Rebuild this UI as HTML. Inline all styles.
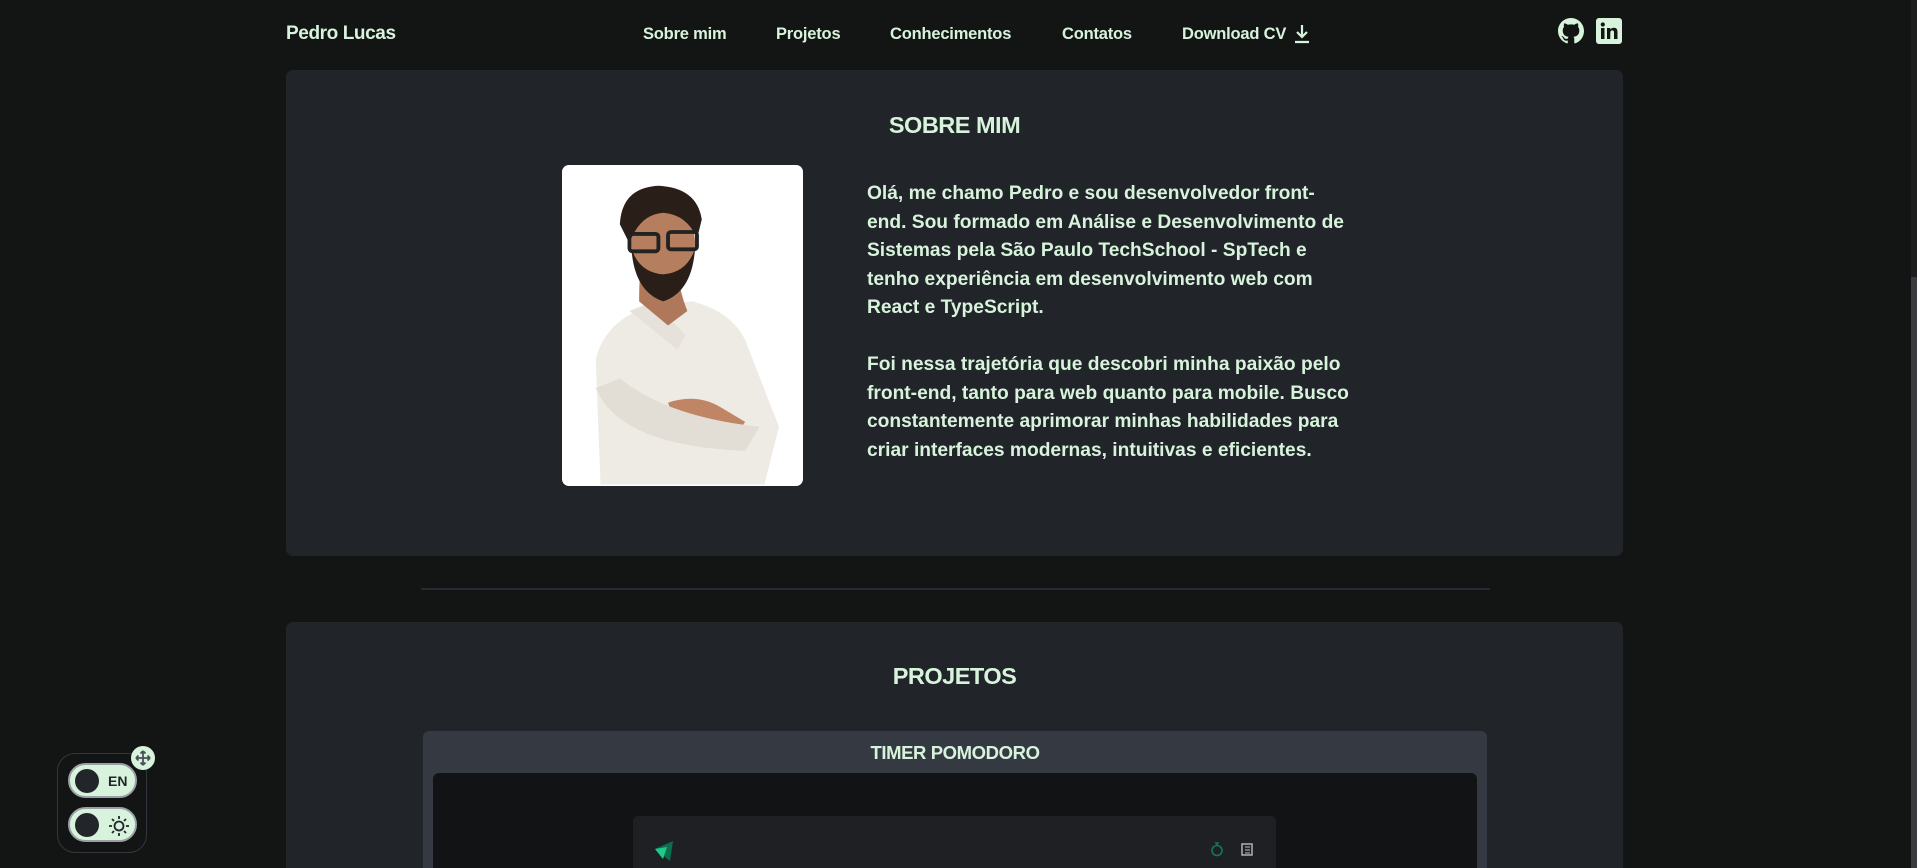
<!DOCTYPE html>
<html><head><meta charset="utf-8"><style>
*{margin:0;padding:0;box-sizing:border-box}
html,body{width:1917px;height:868px;max-height:868px;overflow:hidden;background:#131515;font-family:"Liberation Sans",sans-serif;color:#d8f3dc}
body{position:relative}
.abs{position:absolute}
.nav{font-size:16.5px;font-weight:bold;top:25px;white-space:nowrap;letter-spacing:-0.2px}
.box{position:absolute;left:286px;width:1337px;background:#212429;border-radius:7px}
h2{position:absolute;width:100%;text-align:center;font-size:23.5px;font-weight:bold;letter-spacing:-0.5px}
.txt{position:absolute;left:867px;top:180px;font-size:19.2px;line-height:28.5px;font-weight:bold;letter-spacing:0;white-space:nowrap}
.tog{position:absolute;left:68px;width:69px;height:35px;border-radius:18px;background:#d8f3dc;border:2px solid #9aa0a6}
.tog .k{position:absolute;left:5px;top:4px;width:24px;height:24px;border-radius:50%;background:#22252a}
</style></head><body>
<div class="abs nav" style="left:286px;font-size:19px;top:23px;letter-spacing:-0.4px">Pedro Lucas</div>
<div class="abs nav" style="left:643px">Sobre mim</div>
<div class="abs nav" style="left:776px">Projetos</div>
<div class="abs nav" style="left:890px">Conhecimentos</div>
<div class="abs nav" style="left:1062px">Contatos</div>
<div class="abs nav" style="left:1182px">Download CV</div>
<svg class="abs" style="left:1294px;top:24px" width="16" height="20" viewBox="0 0 16 20"><path d="M8 1v12M3 8l5 5 5-5M1 18h14" stroke="#d8f3dc" stroke-width="2.2" fill="none"/></svg>
<svg class="abs" style="left:1558px;top:18px" width="26" height="26" viewBox="0 0 16 16"><path fill="#d8f3dc" d="M8 0C3.58 0 0 3.58 0 8c0 3.54 2.29 6.53 5.47 7.59.4.07.55-.17.55-.38v-1.33c-2.23.48-2.7-1.07-2.7-1.07-.36-.92-.89-1.17-.89-1.17-.73-.5.06-.49.06-.49.8.06 1.23.83 1.23.83.72 1.22 1.87.87 2.33.66.07-.52.28-.87.51-1.07-1.78-.2-3.64-.89-3.64-3.95 0-.87.31-1.59.82-2.15-.08-.2-.36-1.02.08-2.12 0 0 .67-.21 2.2.82a7.6 7.6 0 0 1 4 0c1.53-1.04 2.2-.82 2.2-.82.44 1.1.16 1.92.08 2.12.51.56.82 1.27.82 2.15 0 3.07-1.87 3.75-3.65 3.95.29.25.54.73.54 1.48v2.2c0 .21.15.46.55.38A8 8 0 0 0 16 8c0-4.42-3.58-8-8-8z"/></svg>
<svg class="abs" style="left:1596px;top:18px" width="26" height="26" viewBox="0 0 26 26"><rect width="26" height="26" rx="3" fill="#d8f3dc"/><rect x="5" y="10" width="3.5" height="11" fill="#131515"/><circle cx="6.8" cy="6.5" r="2.1" fill="#131515"/><path d="M11 10h3.3v1.6c.7-1.2 2-1.9 3.6-1.9 2.6 0 3.6 1.6 3.6 4.4V21H18v-6.2c0-1.5-.4-2.4-1.7-2.4-1.4 0-2 1-2 2.5V21H11z" fill="#131515"/></svg>

<div class="box" style="top:70px;height:486px">
<h2 style="top:42px">SOBRE MIM</h2>
</div>
<div class="abs" style="left:562px;top:165px;width:241px;height:321px;background:#fff;border-radius:7px;overflow:hidden">
<svg width="241" height="321" viewBox="0 0 250 330">
<path d="M40 330 L35 200 Q45 160 90 145 L135 140 Q175 150 190 180 L225 270 L210 330Z" fill="#eeeae4"/>
<path d="M70 150 L95 140 L128 175 L120 190Z" fill="#e6e1da"/>
<path d="M80 140 Q80 115 82 110 L120 110 Q122 130 130 150 L110 165Z" fill="#b0785a"/>
<ellipse cx="105" cy="80" rx="33" ry="42" fill="#b57e5f"/>
<path d="M72 85 Q75 130 105 140 Q135 130 138 85 Q130 110 105 112 Q80 110 72 85Z" fill="#2a1e19"/>
<path d="M60 60 Q62 22 100 20 Q140 22 145 55 L140 75 Q130 50 105 48 Q80 50 70 80Z" fill="#2a1e19"/>
<rect x="70" y="70" width="30" height="18" rx="3" fill="none" stroke="#222" stroke-width="4"/>
<rect x="110" y="68" width="30" height="18" rx="3" fill="none" stroke="#222" stroke-width="4"/>
<path d="M110 245 Q140 235 165 250 L190 265 L180 280 Q150 270 115 260Z" fill="#c08565"/>
<path d="M35 230 Q60 290 190 295 L205 270 Q110 260 60 220Z" fill="#e2ddd5"/>
</svg></div>
<div class="txt">Olá, me chamo Pedro e sou desenvolvedor front-<br>end. Sou formado em Análise e Desenvolvimento de<br>Sistemas pela São Paulo TechSchool - SpTech e<br>tenho experiência em desenvolvimento web com<br>React e TypeScript.<br><br>Foi nessa trajetória que descobri minha paixão pelo<br>front-end, tanto para web quanto para mobile. Busco<br>constantemente aprimorar minhas habilidades para<br>criar interfaces modernas, intuitivas e eficientes.</div>

<div class="abs" style="left:421px;top:588px;width:1069px;height:2px;background:#262a30"></div>

<div class="box" style="top:622px;height:246px;border-radius:7px 7px 0 0">
<h2 style="top:41px">PROJETOS</h2>
</div>
<div class="abs" style="left:423px;top:731px;width:1064px;height:137px;background:#353a42;border-radius:6px 6px 0 0">
<div class="abs" style="width:100%;text-align:center;top:11px;font-size:18.5px;font-weight:bold;letter-spacing:-0.4px">TIMER POMODORO</div>
<div class="abs" style="left:10px;top:42px;width:1044px;height:95px;background:#121315;border-radius:6px 6px 0 0">
<div class="abs" style="left:200px;top:43px;width:643px;height:52px;background:#1f2024;border-radius:5px 5px 0 0">
<svg class="abs" style="left:20px;top:23px" width="24" height="24" viewBox="0 0 24 24"><path d="M2 10 L20 2 L17 22Z" fill="#0b6e4f"/><path d="M2 10 L14 8 L10 20Z" fill="#1fc98a"/></svg>
<svg class="abs" style="left:577px;top:25px" width="14" height="16" viewBox="0 0 14 16"><circle cx="7" cy="9.5" r="5" fill="none" stroke="#0f7a55" stroke-width="1.6"/><path d="M5 2h4M7 2v3" stroke="#0f7a55" stroke-width="1.6"/></svg>
<svg class="abs" style="left:607px;top:25px" width="14" height="16" viewBox="0 0 14 16"><rect x="2" y="3" width="10" height="11" fill="none" stroke="#bbb" stroke-width="1.4"/><path d="M5 6h5M5 9h5M5 12h5" stroke="#bbb"/></svg>
</div></div></div>

<div class="abs" style="left:57px;top:753px;width:90px;height:100px;border:1.5px solid #33373d;border-radius:18px;background:#131515"></div>
<div class="tog" style="top:763px"><div class="k"></div><div class="abs" style="left:38px;top:8px;font-size:14px;font-weight:bold;color:#22252a">EN</div></div>
<div class="tog" style="top:807px"><div class="k"></div>
<svg class="abs" style="left:38px;top:6px" width="22" height="22" viewBox="0 0 22 22"><circle cx="11" cy="11" r="4.5" fill="none" stroke="#22252a" stroke-width="1.8"/><path d="M11 1v3M11 18v3M1 11h3M18 11h3M4 4l2 2M16 16l2 2M4 18l2-2M16 6l2-2" stroke="#22252a" stroke-width="1.8"/></svg></div>
<div class="abs" style="left:131px;top:746px;width:24px;height:24px;border-radius:50%;background:#d8f3dc"></div>
<svg class="abs" style="left:135px;top:750px" width="16" height="16" viewBox="0 0 16 16"><path d="M8 1v14M1 8h14M8 1l-2.5 2.5M8 1l2.5 2.5M8 15l-2.5-2.5M8 15l2.5-2.5M1 8l2.5-2.5M1 8l2.5 2.5M15 8l-2.5-2.5M15 8l-2.5 2.5" stroke="#4a5058" stroke-width="1.8" fill="none"/></svg>

<div class="abs" style="left:1911px;top:0;width:6px;height:868px;background:#1c1e1f"></div>
<div class="abs" style="left:1911px;top:277px;width:6px;height:591px;background:#3a3d40"></div>
</body></html>
